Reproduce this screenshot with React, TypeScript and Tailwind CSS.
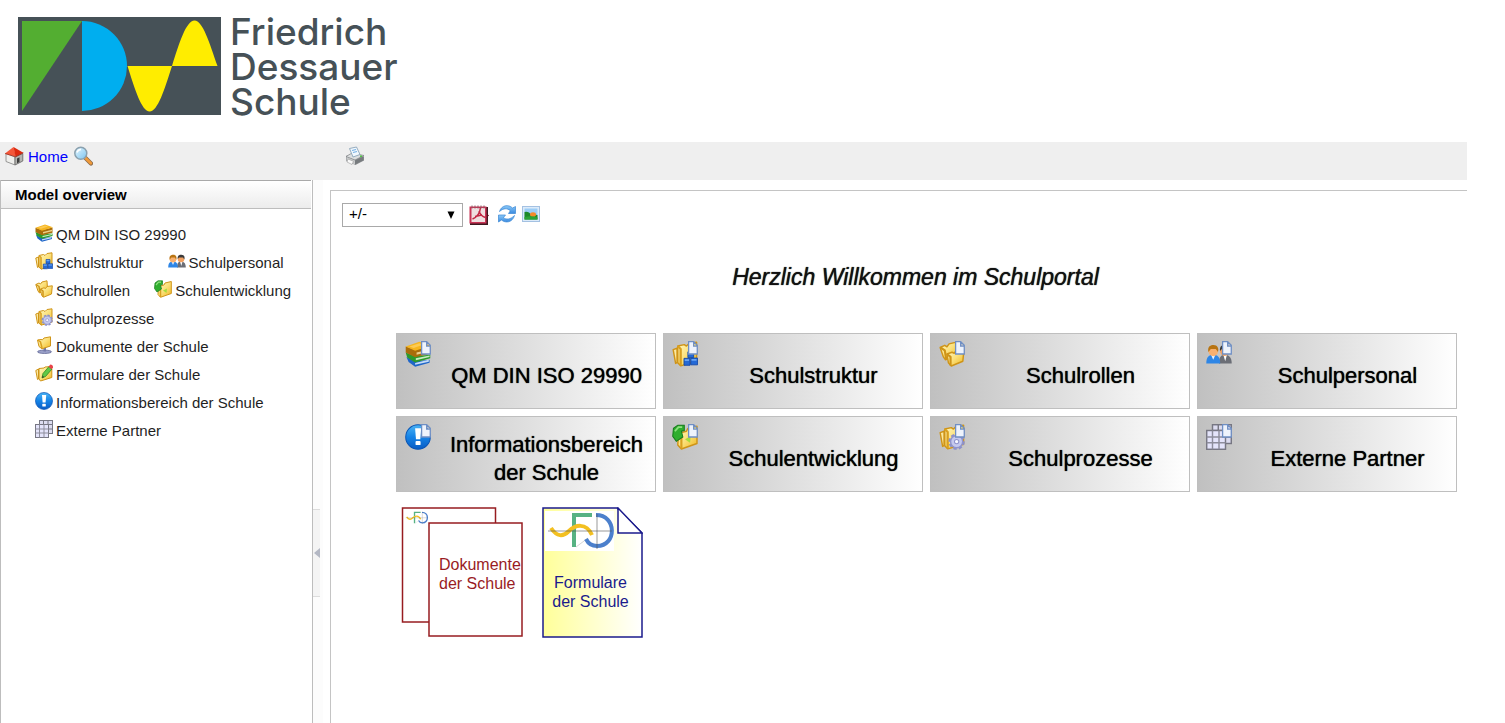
import React from "react";

type IconName =
  | "books"
  | "structure"
  | "people"
  | "roles"
  | "development"
  | "process"
  | "documents"
  | "forms"
  | "info"
  | "partners";

function Gradients() {
  return (
    <svg aria-hidden="true" className="absolute h-0 w-0">
      <defs>
        <linearGradient id="gold" x1="0" y1="0" x2="1" y2="1">
          <stop offset="0" stopColor="#fff9c4" />
          <stop offset="0.5" stopColor="#fbe07a" />
          <stop offset="1" stopColor="#f0b820" />
        </linearGradient>
        <linearGradient id="blueBall" x1="0" y1="0" x2="0" y2="1">
          <stop offset="0" stopColor="#4bb4f5" />
          <stop offset="0.5" stopColor="#1583e6" />
          <stop offset="1" stopColor="#0a5cc4" />
        </linearGradient>
        <linearGradient id="sheet" x1="0" y1="0" x2="1" y2="0">
          <stop offset="0" stopColor="#ffff99" />
          <stop offset="1" stopColor="#ffffff" />
        </linearGradient>
        <linearGradient id="lens" x1="0" y1="0" x2="1" y2="1">
          <stop offset="0" stopColor="#e4f6ff" />
          <stop offset="1" stopColor="#7cc4ee" />
        </linearGradient>
        <linearGradient id="arrowBlue" x1="0" y1="0" x2="0" y2="1">
          <stop offset="0" stopColor="#8ccaf8" />
          <stop offset="1" stopColor="#3a8ae0" />
        </linearGradient>
      </defs>
    </svg>
  );
}

function Folder() {
  return (
    <g stroke="#cf9418" strokeWidth="1" strokeLinejoin="round">
      <path d="M0.800 6 L3.500 5 V15 L2.500 15.500 Z" fill="#fbe9a0" />
      <path d="M4 3.500 L8.500 2.500 L10 3.500 L12 1.500 L17 0.800 V14 L6 17.200 L4 15 Z" fill="url(#gold)" />
      <path d="M4 3.500 L6 5.500 V17" fill="none" stroke="#d9a020" strokeWidth="1.600" />
    </g>
  );
}

const drawings: Record<IconName, React.ReactNode> = {
  books: (
    <g>
      <path d="M1 11 L2.500 14.500 L7 17.800 L17 15 V13 L7 14 Z" fill="#1f66c8" />
      <path d="M7 15.300 L16.500 13 V14.300 L7 16.500 Z" fill="#c4dcf8" />
      <path d="M0.500 8 L1.500 11.500 L7 14.800 L17.500 12 V9.500 L7 10.500 Z" fill="#2c9a2c" />
      <path d="M7.500 12 L17 10 V11 L7.500 13.300 Z" fill="#c8ecc0" />
      <path d="M0.500 3.800 V8 L7 11.300 L17.500 8.700 V3.500 L7 6 Z" fill="#a96c0a" />
      <path d="M8 8 L17 5.800 V7.300 L8 9.500 Z" fill="#ecd08a" />
      <path d="M0.500 3.800 L10 0.600 L17.800 3.300 L7 6.800 Z" fill="#f6b51e" />
      <path d="M3 3.800 L10 1.500 L13 2.500 L6 4.800 Z" fill="#fccb55" />
    </g>
  ),
  structure: (
    <g>
      <Folder />
      <g fill="#2469d6" stroke="#1247a6" strokeWidth="0.600">
        <path d="M11 7.500 h4 v4 h-4z M8.300 12 h4.200 v4.800 h-4.200z M13 11.800 h4.700 v4.700 h-4.700z" />
      </g>
      <path d="M11.500 8 h3 v1.200 h-3z M8.800 12.600 h3 v1.200 h-3z M13.500 12.400 h3.500 v1.200 h-3.500z" fill="#69a5f4" />
    </g>
  ),
  people: (
    <g>
      <path d="M9 15.500 C9 11 10.500 9.500 13 9.500 S17.800 11 17.800 15.500 Z" fill="#6b6e76" />
      <path d="M12 9.500 L13.300 14 L14.500 9.500 Z" fill="#ffffff" />
      <circle cx="13" cy="7" r="3.300" fill="#f2a060" />
      <path d="M9.700 7 C9.200 3 12 2.500 13.500 2.700 C16.500 3 17 5 16.300 7.500 L15 5.500 H11 Z" fill="#3a3a3a" />
      <path d="M0.200 15.500 C0.200 11 2 9.500 5 9.500 S9.800 11 9.800 15.500 Z" fill="#2e86e6" />
      <path d="M3.500 9.500 L5 13 L6.500 9.500 Z" fill="#eaf3ff" />
      <circle cx="5" cy="7.200" r="3.300" fill="#f8b070" />
      <path d="M1.700 7.700 C0.700 3.500 3.500 2.700 5.200 2.700 C8 2.700 9.100 5 8.300 7.700 L6.800 5.600 H3.300 Z" fill="#b87412" />
    </g>
  ),
  roles: (
    <g stroke="#cf9418" strokeWidth="1" strokeLinejoin="round">
      <path d="M0.800 4.500 L4 3 L5.500 4 L7 2 L12 0.800 L12.500 9 L4.500 13 L3 11 Z" fill="url(#gold)" />
      <path d="M1 4.500 L4 6.500 L5 12.500" fill="none" strokeWidth="1.500" />
      <path d="M5.500 9 L9 7.800 L10.500 8.500 L12 6.500 L17.300 5.800 L16.500 14 L8.500 17.300 L6.500 15 Z" fill="url(#gold)" />
      <path d="M5.500 9 L8 11 V17" fill="none" strokeWidth="1.500" />
    </g>
  ),
  development: (
    <g>
      <path d="M4.500 6.500 L10 5 L11 3 L17.300 1.500 V13.500 L6.500 17.300 L4 14.500 Z" fill="url(#gold)" stroke="#cf9418" strokeLinejoin="round" />
      <path d="M4.500 7 L6.500 9 V17" fill="none" stroke="#d9a020" strokeWidth="1.500" />
      <path d="M0.500 8.500 L1 3 L4 0.800 L8.500 0.800 V4.500 L6.500 5 L7.500 9 L3 12 Z" fill="#2fae2f" stroke="#157a1b" strokeWidth="0.700" />
      <path d="M2 5 L4.500 2.200 H7" fill="none" stroke="#8fe07f" strokeWidth="1.200" />
      <path d="M9 10.500 L13 8.500 L12.500 13 Z" fill="#a5dd3c" />
    </g>
  ),
  process: (
    <g>
      <Folder />
      <circle cx="12.200" cy="12.200" r="4.900" fill="none" stroke="#8c90c8" strokeWidth="1.500" strokeDasharray="2.300 1.500" />
      <circle cx="12.200" cy="12.200" r="4.200" fill="#c5c9ee" stroke="#8f94cc" />
      <circle cx="12.200" cy="12.200" r="1.500" fill="#f7f7ff" stroke="#8f94cc" strokeWidth="0.700" />
    </g>
  ),
  documents: (
    <g>
      <ellipse cx="9.500" cy="15.800" rx="7" ry="1.700" fill="#9aa0c8" stroke="#656b98" strokeWidth="0.800" />
      <path d="M8.500 10 h2.500 v5.500 h-2.500z" fill="#7278a8" />
      <path d="M2.500 4 L6 3.500 L7.500 3.800 L9 2 L15.500 0.800 V10 L7 12.800 L4 10.500 Z" fill="url(#gold)" stroke="#cf9418" strokeLinejoin="round" />
      <path d="M2.800 4 L5.500 6 L7 12" fill="none" stroke="#d9a020" strokeWidth="1.500" />
    </g>
  ),
  forms: (
    <g>
      <path d="M0.800 6.500 L3.500 5 V15 L2.500 15.500 Z" fill="#fbe9a0" stroke="#cf9418" />
      <path d="M4 4.500 L9 4 L10 3 L16.800 2.500 V13.500 L5.500 17 L4 15 Z" fill="url(#gold)" stroke="#cf9418" strokeLinejoin="round" />
      <path d="M7 14 L8 9.500 L14 2.500 L17 5 L10.500 12.500 Z" fill="#62c947" stroke="#2e8a22" strokeWidth="0.800" />
      <path d="M13.500 2.800 L15.300 0.600 Q18 0.800 18 3.200 L16.500 5.200 Z" fill="#e8434a" />
      <path d="M7 14 L7.600 11.500 L9 13 Z" fill="#3b3b2a" />
    </g>
  ),
  info: (
    <g>
      <circle cx="9" cy="9" r="8.500" fill="url(#blueBall)" stroke="#0b55b5" strokeWidth="0.700" />
      <path d="M7 3 h4.200 l-0.600 7.500 h-3z" fill="#ffffff" />
      <rect x="7.300" y="11.800" width="3.500" height="2.800" rx="0.600" fill="#ffffff" />
    </g>
  ),
  partners: (
    <g stroke="#777783" strokeWidth="1">
      <rect x="4.500" y="0.500" width="13" height="13" fill="#dcdcf0" />
      <path d="M8.500 0.500 v13 M13 0.500 v13 M4.500 4.500 h13 M4.500 9 h13" />
      <rect x="0.500" y="4.500" width="13" height="13" fill="#e4e4fb" />
      <path d="M4.500 4.500 v13 M9 4.500 v13 M0.500 9 h13 M0.500 13 h13" stroke="#8d8d9c" />
    </g>
  ),
};

function Icon({ name, className, linked }: { name: IconName; className: string; linked?: boolean }) {
  return (
    <svg viewBox="0 0 18 18" aria-hidden="true" className={className}>
      {drawings[name]}
      {linked && (
        <path d="M11.500 0.500 H15 L17.500 3 V9 H11.500 Z M15 0.500 V3.500 H17.500" fill="#eef3fc" stroke="#6f8fc4" strokeWidth="0.900" />
      )}
    </svg>
  );
}

const menu: { label: string; icon: IconName }[][] = [
  [{ label: "QM DIN ISO 29990", icon: "books" }],
  [
    { label: "Schulstruktur", icon: "structure" },
    { label: "Schulpersonal", icon: "people" },
  ],
  [
    { label: "Schulrollen", icon: "roles" },
    { label: "Schulentwicklung", icon: "development" },
  ],
  [{ label: "Schulprozesse", icon: "process" }],
  [{ label: "Dokumente der Schule", icon: "documents" }],
  [{ label: "Formulare der Schule", icon: "forms" }],
  [{ label: "Informationsbereich der Schule", icon: "info" }],
  [{ label: "Externe Partner", icon: "partners" }],
];

const tiles: { label: string; icon: IconName }[] = [
  { label: "QM DIN ISO 29990", icon: "books" },
  { label: "Schulstruktur", icon: "structure" },
  { label: "Schulrollen", icon: "roles" },
  { label: "Schulpersonal", icon: "people" },
  { label: "Informationsbereich der Schule", icon: "info" },
  { label: "Schulentwicklung", icon: "development" },
  { label: "Schulprozesse", icon: "process" },
  { label: "Externe Partner", icon: "partners" },
];

function Header() {
  return (
    <header className="flex h-[142px] items-start gap-[9px] pt-[14px] pl-[18px]">
      <svg viewBox="0 0 203 98" aria-hidden="true" className="mt-[3px] h-[98px] w-[203px]">
        <rect width="203" height="98" fill="#465157" />
        <path d="M4 4 H64 L4 94 Z" fill="#53ae31" />
        <path d="M64 4 A45 45 0 0 1 64 94 Z" fill="#00aeef" />
        <path d="M109.500 49 c7.200 23 14.200 45.500 22.200 45.500 s15 -22.500 22.300 -45.500 Z" fill="#ffed00" />
        <path d="M154 49 c7.200 -23 14.200 -45.500 22.500 -45.500 s15 22.500 23 45.500 Z" fill="#ffed00" />
      </svg>
      <h1 className="font-['Inter',sans-serif] text-[37px] leading-[35px] font-medium text-[#465157]">
        Friedrich
        <br />
        Dessauer
        <br />
        Schule
      </h1>
    </header>
  );
}

function Toolbar() {
  return (
    <nav className="mr-[38px] flex h-[38px] items-start bg-[#efefef] pt-1">
      <div className="flex w-[345px] items-center pl-1">
        <a href="#home" className="flex items-center gap-1 text-[15px] leading-5 text-[#0000ff]">
          <svg viewBox="0 0 20 20" aria-hidden="true" className="mb-[2px] h-5 w-5">
            <path d="M2 8 L10 11 L19 7 V14 L11 19 L2 15 Z" fill="#d0d0d0" />
            <path d="M2 7.500 L11 11 V19 L2 15.500 Z" fill="#efefec" stroke="#8e8e8e" strokeWidth="0.900" />
            <path d="M11 11 L18.800 7.500 V15 L11 19 Z" fill="#b4b4b0" stroke="#6e6e6e" strokeWidth="0.900" />
            <path d="M13 12.500 L15.500 11.300 V16 L13 17.200 Z" fill="#3c3c3c" />
            <path d="M1 7.500 L9.500 1 L12 10.500 Z" fill="#f4573a" />
            <path d="M9.500 1 L19.300 6.800 L11.500 10.500 Z" fill="#dc2a10" />
            <path d="M1 7.500 L11.500 10.700 L19.300 6.800" fill="none" stroke="#a31c08" strokeWidth="0.700" />
          </svg>
          Home
        </a>
        <button type="button" aria-label="Search" className="mb-[2px] ml-[5px]">
          <svg viewBox="0 0 20 20" aria-hidden="true" className="block h-5 w-5">
            <path d="M11.500 11 L18 17.500" stroke="#8a6a4a" strokeWidth="4.200" strokeLinecap="round" />
            <path d="M12.500 12 L17.800 17.300" stroke="#f09a3a" strokeWidth="2.800" strokeLinecap="round" />
            <circle cx="7.800" cy="7.300" r="6" fill="url(#lens)" stroke="#8aa0ae" strokeWidth="1.500" />
            <path d="M4 6.500 Q5 3.500 8 3.500" fill="none" stroke="#ffffff" strokeWidth="1.400" />
          </svg>
        </button>
      </div>
      <button type="button" aria-label="Print">
        <svg viewBox="0 0 20 20" aria-hidden="true" className="block h-5 w-5">
          <path d="M1 10 L8 7.500 L19 10.500 V14.500 L10.500 19 L1 15 Z" fill="#8e9194" />
          <path d="M1 10.500 L7 7 L19 9.500 L10 14 Z" fill="#dddfe0" stroke="#7f8285" strokeWidth="0.700" />
          <path d="M4.500 2.500 L11.500 1 L15 8.500 L8 11 Z" fill="#f1f8fe" stroke="#8ba4b8" strokeWidth="0.900" />
          <path d="M7 4.500 L11 3.500 M8 6.500 L12 5.500" stroke="#76b0e4" strokeWidth="1.200" />
          <path d="M1.500 11 L10 14.500 V18.500 L1.500 14.800 Z" fill="#c9cbcc" />
          <path d="M3 13 L8.500 15.300 L7 18.500 L2 16 Z" fill="#fafafa" stroke="#9a9a9a" strokeWidth="0.600" />
          <path d="M10 14.500 L18.500 10.500 V14.300 L10 18.500 Z" fill="#777b7e" />
          <circle cx="16" cy="10.300" r="1" fill="#46c23a" />
        </svg>
      </button>
    </nav>
  );
}

function Sidebar() {
  return (
    <aside className="w-[313px] shrink-0 border-x border-[#bdbdbd] pr-px">
      <h2 className="h-[29px] border-y border-[#a9a9a9] border-b-[#bdbdbd] bg-linear-to-b from-white to-[#ececec] pl-[14px] text-[15px] leading-[28px] font-bold text-black">
        Model overview
      </h2>
      <ul className="pt-3 pl-[34px]">
        {menu.map((row) => (
          <li key={row[0].label} className="flex h-7 items-center gap-6">
            {row.map((item) => (
              <a key={item.label} href="#model" className="flex items-center gap-[3px] text-[15px] leading-7 whitespace-nowrap text-[#1f1f1f]">
                <Icon name={item.icon} className="mb-1 h-[18px] w-[18px]" />
                {item.label}
              </a>
            ))}
          </li>
        ))}
      </ul>
    </aside>
  );
}

function ModelTools() {
  return (
    <div className="flex items-center pt-3 pl-[11px]">
      <div className="grid w-[121px] items-center">
        <select
          aria-label="Zoom"
          className="col-start-1 row-start-1 h-6 appearance-none border border-[#a9a9a9] bg-white pr-5 pb-[2px] pl-[6px] text-[15px] leading-5 text-black"
        >
          <option>+/-</option>
        </select>
        <svg viewBox="0 0 8 8" aria-hidden="true" className="pointer-events-none col-start-1 row-start-1 mr-2 h-2 w-2 justify-self-end">
          <path d="M0.500 0.500 H7.500 L4 8 Z" fill="#000000" />
        </svg>
      </div>
      <button type="button" aria-label="PDF" className="ml-[6px]">
        <svg viewBox="0 0 20 20" aria-hidden="true" className="block h-5 w-5">
          <rect x="1" y="2" width="18" height="18" fill="#3c1820" />
          <path d="M17 8 L20 10.500 L17 13 Z" fill="#5a0d1c" />
          <rect x="0.500" y="1.500" width="17" height="17" fill="#c93355" />
          <rect x="2.500" y="3" width="13.500" height="14" fill="#efdfe0" />
          <path d="M3.500 14 C8 12 11 8 11.500 2.500 M10 6 C11 9 13 11.500 16.500 12.500 M6 11.500 L13 10" fill="none" stroke="#c22743" strokeWidth="1.500" />
          <path d="M3 0.500 v3 M6 0.500 v3 M9 0.500 v3 M12 0.500 v3 M15 0.500 v3" stroke="#8a5a64" />
        </svg>
      </button>
      <button type="button" aria-label="Refresh" className="mb-[2px] ml-2">
        <svg viewBox="0 0 20 20" aria-hidden="true" className="block h-5 w-5">
          <g fill="url(#arrowBlue)" stroke="#3a86d4" strokeWidth="0.700" strokeLinejoin="round">
            <path d="M2.500 7.500 C4.500 1 11.500 0 15.500 4 L18.500 2.500 V9.500 H11.500 L13.300 6.800 C10.500 4 6.500 4 2.500 7.500 Z" />
            <path d="M17.500 11.500 C15.500 18.500 8.500 19.500 4.500 16 L1.500 18 V11 H8.500 L6.500 13.500 C9 16 13.500 15.500 17.500 11.500 Z" />
          </g>
        </svg>
      </button>
      <button type="button" aria-label="Image" className="mb-[2px] ml-[5px]">
        <svg viewBox="0 0 18 16" aria-hidden="true" className="block h-4 w-[18px]">
          <rect x="0.500" y="0.500" width="17" height="15" fill="#dcebfa" stroke="#a4c1e2" />
          <rect x="2.500" y="2.500" width="13" height="11" fill="#9ccdf6" />
          <path d="M2.500 6 Q7 5 9 9 Q12 8 15.500 9 V13.500 H2.500 Z" fill="#1d8a2a" />
          <ellipse cx="11" cy="8.500" rx="3" ry="2.300" fill="#f58a2a" />
          <path d="M2.500 11 Q9 9.500 15.500 11.500 V13.500 H2.500 Z" fill="#2ba336" />
        </svg>
      </button>
    </div>
  );
}

function Tile({ label, icon }: { label: string; icon: IconName }) {
  return (
    <a
      href="#model"
      className="flex h-[76px] items-start gap-[19px] overflow-hidden border border-[#bfbfbf] bg-linear-to-r from-[#c0c0c0] to-white pr-3 pl-2"
    >
      <Icon name={icon} linked className="mt-[7px] h-[26px] w-[26px] shrink-0" />
      <span className="mt-[10px] flex h-16 min-w-0 flex-1 items-center justify-center overflow-hidden text-center text-[22px] leading-7 text-black [text-shadow:0_0_1px_black]">
        {label}
      </span>
    </a>
  );
}

function SchoolMark() {
  return (
    <g fill="none">
      <path d="M46 4 H28 V36" stroke="#57b283" strokeWidth="4" />
      <path d="M30 36 L42 27" stroke="#c9c9c9" strokeWidth="0.800" />
      <path d="M50 4 C71 4 71 35 51 35 C46 35 42 32 40 28" stroke="#4c80cc" strokeWidth="4" />
      <path d="M5 17 C11 26 17 26 23 20 S40 11 46 24" stroke="#f3c021" strokeWidth="4" />
      <path d="M2 20 H66 M51 3 V38" stroke="#555555" strokeWidth="0.600" />
    </g>
  );
}

function Documents() {
  return (
    <div className="flex items-start gap-[19px] pt-[15px] pl-[5px]">
      <a href="#documents" className="relative block h-[130px] w-[122px] pt-[48px] pl-[38px] text-base leading-[19px] text-[#991c24]">
        <svg viewBox="0 0 122 130" aria-hidden="true" className="absolute inset-0 h-full w-full">
          <rect x="1.500" y="1" width="93" height="114" fill="#ffffff" stroke="#971c20" strokeWidth="1.500" />
          <g transform="translate(4 4) scale(0.340)">
            <SchoolMark />
          </g>
          <rect x="28" y="16" width="93" height="113" fill="#ffffff" stroke="#971c20" strokeWidth="1.500" />
        </svg>
        <span className="relative">
          Dokumente
          <br />
          der Schule
        </span>
      </a>
      <a href="#forms" className="relative block h-[131px] w-[101px] pt-[66px] pr-1 text-center text-base leading-[19px] text-[#1b1b8c]">
        <svg viewBox="0 0 101 131" aria-hidden="true" className="absolute inset-0 h-full w-full">
          <path d="M1 1 H75 L100 26 V130 H1 Z" fill="url(#sheet)" stroke="#1b1b8c" strokeWidth="1.500" />
          <rect x="3" y="4" width="69" height="40" fill="#ffffff" />
          <g transform="translate(4 4)">
            <SchoolMark />
          </g>
          <path d="M76 1 V26 H100 Z" fill="#ffffff" stroke="#1b1b8c" strokeWidth="1.500" />
        </svg>
        <span className="relative">
          Formulare
          <br />
          der Schule
        </span>
      </a>
    </div>
  );
}

export default function App() {
  return (
    <div className="flex min-h-screen flex-col bg-white font-['Liberation_Sans',Arial,sans-serif]">
      <Gradients />
      <Header />
      <Toolbar />
      <div className="mr-[38px] flex flex-1">
        <Sidebar />
        <div className="w-[10px] shrink-0 bg-[#fcfcfc] pt-[329px]">
          <button
            type="button"
            aria-label="Collapse sidebar"
            className="flex h-[88px] w-[7px] items-center justify-center border-y border-[#dcdcdc] bg-[#f4f4f4]"
          >
            <svg viewBox="0 0 6 10" aria-hidden="true" className="h-[10px] w-[6px]">
              <path d="M6 0 V10 L0 5 Z" fill="#b4b8c4" />
            </svg>
          </button>
        </div>
        <main className="mt-[10px] ml-[7px] min-w-0 flex-1 border-t border-l border-[#c4c4c4]">
          <ModelTools />
          <section className="pr-[10px] pl-[65px]">
            <h2 className="pt-[36px] pr-[22px] text-center text-[23px] leading-7 font-normal text-[#111111] italic [text-shadow:0_0_1px_black]">
              Herzlich Willkommen im Schulportal
            </h2>
            <div className="mt-[42px] grid grid-cols-4 gap-[7px]">
              {tiles.map((tile) => (
                <Tile key={tile.label} label={tile.label} icon={tile.icon} />
              ))}
            </div>
            <Documents />
          </section>
        </main>
      </div>
    </div>
  );
}
